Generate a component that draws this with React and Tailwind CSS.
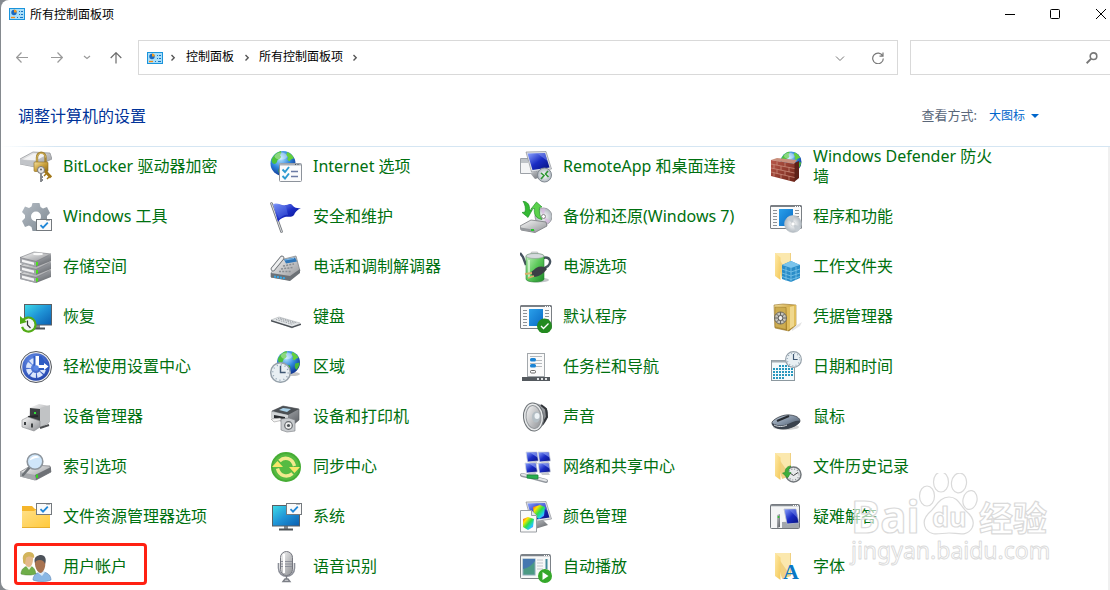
const stops = {
  silver: ['#fafafa', '#8d8f93'],
  steel: ['#c9ccd0', '#5a5d62'],
  navy: ['#8fa6ff', '#1a2cc4', '#05107c'],
  cyan: ['#3fdde8', '#1f93d6', '#0a5eb0'],
  blue: ['#2aa0ea', '#0a6ac4'],
  gold: ['#f7e3a0', '#c9a03c', '#8f6a18'],
  folder: ['#ffe9a6', '#f3c95a'],
  folderFlat: ['#ffe08a', '#ffc93a'],
  battery: ['#c8f2c4', '#5cc95a', '#1d8a28'],
  brick: ['#b8584a', '#702418'],
  rainbow: ['#ff2a2a', '#ffe600', '#2ae04a', '#20c8ff', '#d020ff'],
  gear: ['#b4bcc4', '#7d8790'],
  mouse: ['#c3ced9', '#7e8da0', '#39414d'],
}

function Gradients() {
  return (
    <svg className="absolute size-0" aria-hidden="true">
      <defs>
        {Object.entries(stops).map(([id, colors]) => (
          <linearGradient key={id} id={id} x1="0" y1="0" x2="1" y2="1">
            {colors.map((color, i) => (
              <stop key={color} offset={i / (colors.length - 1)} stopColor={color} />
            ))}
          </linearGradient>
        ))}
        <radialGradient id="globe" cx="0.4" cy="0.3" r="0.75">
          <stop offset="0" stopColor="#b8e6ff" />
          <stop offset="0.5" stopColor="#2f86dc" />
          <stop offset="1" stopColor="#0b2c8c" />
        </radialGradient>
        <radialGradient id="disc" cx="0.5" cy="0.5" r="0.55">
          <stop offset="0" stopColor="#ffffff" />
          <stop offset="1" stopColor="#a9b2ba" />
        </radialGradient>
        <radialGradient id="access" cx="0.4" cy="0.3" r="0.8">
          <stop offset="0" stopColor="#6a92ea" />
          <stop offset="1" stopColor="#1c3ea8" />
        </radialGradient>
      </defs>
    </svg>
  )
}

/* shared pieces */

function Globe({ cx, cy, r }) {
  return (
    <g transform={`translate(${cx} ${cy}) scale(${r / 12})`}>
      <circle r="12" fill="url(#globe)" />
      <path d="M-11-4c2-4 5-7 9-8 1 2 0 3-1 4 2 1 1 3-1 4-2 0-1 3-3 4-2 1-4 0-4-4z" fill="#4cc23a" />
      <path d="M4-11c3 1 5 3 6.500 6l-2.500 1-2 2-2-2 1-2-2-2z" fill="#63cf3e" />
      <path d="M-3 3c3-1 5 0 5 2 0 3-3 3-4 6-3-2-3-5-1-8z" fill="#3aa832" />
      <path d="M7 1l4.500-1c0 3-1 5-3 7.500-2-1-2.500-4-1.500-6.500z" fill="#48b838" />
      <ellipse cx="-2" cy="-7" rx="6" ry="3.500" fill="#fff" opacity=".35" />
    </g>
  )
}

function CheckWindow({ x, y }) {
  return (
    <g transform={`translate(${x} ${y})`}>
      <rect x=".5" y=".5" width="15" height="11" fill="#fafafa" stroke="#74797e" />
      <path d="M10.500 1.500h1M12.500 1.500h1" stroke="#74797e" />
      <path d="M4.500 6.200l2.500 2.500 4.800-5" fill="none" stroke="#1f87d8" strokeWidth="1.800" />
    </g>
  )
}

function Clock({ cx, cy, r }) {
  return (
    <g transform={`translate(${cx} ${cy}) scale(${r / 10})`}>
      <circle r="9.500" fill="#e8eff3" stroke="#96a1aa" strokeWidth="1.400" />
      <circle r="7.500" fill="none" stroke="#8fa3b3" strokeDasharray="1 2.930" strokeWidth="1.400" />
      <path d="M0-6.500V0h5" fill="none" stroke="#3f5873" strokeWidth="1.400" />
    </g>
  )
}

function TallFolder() {
  return (
    <>
      <path d="M5 2h16v23l-9 3z" fill="#f0d182" />
      <path d="M5 2h15v22l-9-13z" fill="#fbe8ae" />
      <path d="M5 2l5.500 4.500v22.500L5 25z" fill="url(#folder)" />
    </>
  )
}

function ListWindow() {
  return (
    <>
      <rect x=".5" y="4.500" width="31" height="23" rx=".5" fill="#fafafa" stroke="#7a7f84" />
      <path d="M1 5.500h30" stroke="#7a7f84" />
      <path d="M25 5.500h1M27 5.500h1M29 5.500h1" stroke="#fff" />
      <path d="M3 9.500h4M3 12.500h4M3 15.500h4M3 18.500h4M3 21.500h4M3 24.500h4M25 9.500h4M25 12.500h4M25 15.500h4M25 18.500h4" stroke="#8d9297" />
      <rect x="9" y="8" width="14" height="17" fill="url(#blue)" />
    </>
  )
}

function FlatMonitor({ x, y }) {
  return (
    <g transform={`translate(${x} ${y})`}>
      <path d="M12 20h4v4h-4z" fill="#84898e" />
      <path d="M7 23.500h14v2H7z" fill="#4d5257" />
      <rect x=".5" y=".5" width="27" height="20.500" fill="url(#cyan)" stroke="#5a5f64" />
    </g>
  )
}

function TiltMonitor() {
  return (
    <>
      <path d="M10 22l13-3 5 5-13 4z" fill="url(#steel)" />
      <path d="M6 1l20-.5 5.500 17.500-20 3z" fill="#dfe2e6" stroke="#7d8288" strokeWidth=".6" />
      <path d="M7.500 2.500l17.500-.5 4.500 14.500-17 2.500z" fill="url(#navy)" />
      <path d="M17 2.200l8-.2 2.500 8z" fill="#8da0f2" opacity=".45" />
    </>
  )
}

/* one drawing per item, on a 32 x 32 grid */

const icons = {
  bitlocker: (
    <>
      <path d="M0 8l13-7 17 1 2 6-17 8-15-3z" fill="url(#silver)" stroke="#8c8f93" strokeWidth=".7" />
      <path d="M0 8l15 3v5L0 13z" fill="#c1c4c8" />
      <path d="M3 8.500l11-6 13 1-11 6z" fill="#f3f3f4" />
      <path d="M17 12V6.500c0-6.500 8.500-6.500 8.500 0V12" fill="none" stroke="#a58536" strokeWidth="2.400" />
      <path d="M17 12V6.500c0-5.500 8.500-5.500 8.500 0" fill="none" stroke="#e0c46c" strokeWidth=".8" />
      <rect x="14" y="11" width="14" height="9.500" rx="1" fill="url(#gold)" stroke="#8b6a1f" strokeWidth=".6" />
      <path d="M23 18l8 8.500" stroke="#a27718" strokeWidth="3" />
      <path d="M26 23l-2 2M29 26l-2 2" stroke="#a27718" strokeWidth="1.500" />
      <circle cx="21" cy="19" r="3.500" fill="#e6e6e6" stroke="#777" />
      <circle cx="21" cy="18.500" r="1" fill="#666" />
      <path d="M21 22v9M21 26h2M21 29h2" stroke="#85888c" strokeWidth="1.900" />
    </>
  ),
  internet: (
    <>
      <Globe cx={13} cy={12.5} r={12.5} />
      <rect x="9.500" y="12.500" width="22" height="18" rx="1" fill="#fbfbfc" stroke="#8d939b" />
      <path d="M10 13.500h21" stroke="#aab0b8" strokeWidth="2" />
      <path d="M25 13.500h1M27.500 13.500h1" stroke="#4d545c" />
      <path d="M12.500 18.500l2.500 2.500 4-5M12.500 25l2.500 2.500 4-5" fill="none" stroke="#2c9ad0" strokeWidth="1.900" />
      <path d="M21 20.500h7M21 25.500h7" stroke="#6b7aa4" strokeWidth="1.400" />
    </>
  ),
  remote: (
    <>
      <path d="M.5 7.500h16v15H.5z" fill="#f4f5f6" stroke="#9ca1a7" />
      <path d="M1 9h9M1 11h7" stroke="#8a9299" />
      <TiltMonitor />
      <circle cx="24.500" cy="24" r="7" fill="url(#disc)" stroke="#808890" />
      <path d="M21 22l3 2.500-3 3.500M28 20l-2.500 3 3 3" fill="none" stroke="#2f9632" strokeWidth="1.600" />
    </>
  ),
  firewall: (
    <>
      <Globe cx={21} cy={11} r={10.5} />
      <path d="M24 12l5-2v17l-5 4z" fill="#5e2118" />
      <path d="M1 9l6-2 20 2-3 4z" fill="#c98f7c" />
      <path d="M1 9l23.500 4v18L1 25z" fill="url(#brick)" />
      <path d="M1 13l23.500 4.500M1 17l23.500 5M1 21l23.500 5.500M7 10v4M15 11.500v4M4 13.500v4M11 15v4M19 16.500v4.500M7 18.500v4M15 20.200v4M4 21.500v4M11 23.300v4M19 25v4.500" stroke="#cf9584" strokeWidth=".7" />
    </>
  ),
  tools: (
    <>
      <path
        d="M12.500 2h7l1 4 2.500 1.500 4-1.500 3 6-3 3v3l3 3-3 6-4-1.500-2.500 1.500-1 3h-7l-1-4L9 24.500l-4 1.500-3-6 3-3v-3l-3-3 3-5.500L9 7l2.500-1.500z"
        fill="url(#gear)"
      />
      <circle cx="16" cy="15.500" r="5" fill="#fff" />
      <CheckWindow x={16} y={18} />
    </>
  ),
  flag: (
    <>
      <path d="M1.500 2.500l10 28" stroke="#75797e" strokeWidth="2.600" strokeLinecap="round" />
      <path d="M1.500 2.500l10 28" stroke="#dadcdf" strokeWidth="1" strokeLinecap="round" />
      <path d="M3 3c5-2 8 2 13 1 4-1 5-2 7 1 2 2 5 2.500 8 2-4 2-6 4-7 7-3 3-6 1-9 2-4 1.500-5 2-7 5z" fill="url(#navy)" />
      <path d="M4 4c5-1 8 2 12 1l2 9c-4-1-6 2-9 4z" fill="#5c78ea" opacity=".45" />
    </>
  ),
  backup: (
    <>
      <circle cx="23.500" cy="15.500" r="8.500" fill="url(#disc)" stroke="#9a9da1" />
      <path d="M23.500 15.500l-3-8 5-.3zM23.500 15.500l7 4.500-4 3.500z" fill="#d9b8e0" opacity=".7" />
      <circle cx="23.500" cy="15.500" r="2" fill="#fff" stroke="#888" />
      <path d="M0 25l11-6 15 2 1 4-12 6.500L1 29z" fill="url(#silver)" stroke="#777a7e" strokeWidth=".8" />
      <path d="M1 26.500l14 2.500v2L1 29z" fill="#96999d" />
      <path d="M11 29h3" stroke="#25c62a" strokeWidth="2" />
      <path d="M3 0c5 1 7 4 6.500 9l3-.5-4.500 8L2 11.500l3-.5C6 7 5 4 3 0z" fill="#34b933" stroke="#138a1b" strokeWidth=".6" />
      <path d="M16.500 1l5.500 5-2.500.5c-.5 5 0 8 2.500 12-6-1-8.500-5-7.500-11L11 8z" fill="#5bd14c" stroke="#138a1b" strokeWidth=".6" />
    </>
  ),
  programs: (
    <>
      <ListWindow />
      <circle cx="23" cy="23" r="8.500" fill="url(#disc)" stroke="#b9bfc5" strokeWidth=".6" />
      <path d="M23 23l-6-6c2-2 5-2.500 7-2zM23 23l8 3c-1 3-3 4.500-5 5z" fill="#c5ccd2" />
      <circle cx="23" cy="23" r="2" fill="#fff" stroke="#c0c4c8" strokeWidth=".6" />
    </>
  ),
  storage: (
    <>
      {[20, 12, 4].map((y) => (
        <g key={y} transform={`translate(0 ${y})`}>
          <path d="M0 2v6l16 4 15-6V0z" fill="url(#steel)" />
          <path d="M0 2.500l16 4V12L0 8z" fill="#a2a4a9" />
          <path d="M2 4.500l12 3v2.500L2 7z" fill="#f3f3f4" />
          <path d="M0 2.500L14-3l17 2-15 7.500z" fill="url(#silver)" stroke="#77797d" strokeWidth=".6" />
          <rect x="16" y="7" width="2" height="3.500" fill="#4ce01c" />
        </g>
      ))}
      <ellipse cx="18" cy="3" rx="5" ry="1.200" fill="#fafafa" />
    </>
  ),
  phone: (
    <>
      <path d="M1 22l9-13 16-4 4 15-10 9L1 26z" fill="url(#silver)" stroke="#777c81" strokeWidth=".7" />
      <path d="M1 22l19 3 10-7v4L20 30 1 26.500z" fill="#6c7176" />
      <path d="M4 25.500l12 2" stroke="#33a7e8" strokeWidth="2" strokeDasharray="2 1" />
      <path d="M14 8.500l11-2 2 4-11 2z" fill="#2f76b8" />
      <path d="M15 9l9-1.500" stroke="#7bb9ea" />
      <path d="M13 15l11-2M11 18l12-1.500M9 20.500l12 0" stroke="#888d92" strokeWidth="1.500" strokeDasharray="2 1.200" />
      <path d="M3 18L12 7" fill="none" stroke="#676c71" strokeWidth="4.600" strokeLinecap="round" />
      <path d="M3 18L12 7" fill="none" stroke="#eff0f1" strokeWidth="3" strokeLinecap="round" />
    </>
  ),
  power: (
    <>
      <ellipse cx="18" cy="29" rx="11" ry="2.500" fill="#c3c6c9" />
      <path d="M0 2l3 4 3 8M23 7c7-2 9 4 5 8l-7 4" fill="none" stroke="#45525e" strokeWidth="2.400" />
      <rect x="11" y="1" width="7" height="3" rx="1" fill="#dcdfe1" stroke="#999" strokeWidth=".5" />
      <path d="M6 5c0-3 18-3 18 0v23c0 4-18 4-18 0z" fill="url(#battery)" stroke="#2a8132" strokeWidth=".6" />
      <ellipse cx="15" cy="5" rx="9" ry="2.500" fill="#d5dadd" stroke="#8f9a96" strokeWidth=".6" />
      <path d="M9 9v18" stroke="#e5fbe1" strokeWidth="2" opacity=".7" />
      <path d="M10 22l6-5c4-2 8-2 11 1-3 4-8 8-13 8z" fill="#3b3f45" />
      <path d="M5 23l7-1M8 27l6-2" stroke="#d8b06a" strokeWidth="1.800" />
    </>
  ),
  workFolder: (
    <>
      <TallFolder />
      <path d="M12 14l9-4 9 4v13l-9 4-9-3z" fill="#2a8dc8" />
      <path d="M12 14l9-4 9 4-9 3z" fill="#7bc4ec" />
      <path d="M12 18l9 3 9-3M12 22l9 3 9-3M12 25.500l9 3 9-3M21 17v14M16 16v14M26 16v13" fill="none" stroke="#7cc4ea" strokeWidth=".8" />
    </>
  ),
  recovery: (
    <>
      <FlatMonitor x={4} y={3} />
      <circle cx="8" cy="24" r="7" fill="#f4f5f5" />
      <path d="M2.500 20a7 7 0 1 1-.5 6" fill="none" stroke="#52ab15" strokeWidth="2.200" />
      <path d="M0 15v8l7-2z" fill="#52ab15" />
      <path d="M7.500 19.500V24l3 3" fill="none" stroke="#333" strokeWidth="1.200" />
    </>
  ),
  keyboard: (
    <>
      <path d="M1 19l8-3 21 6-8 5z" fill="#e3e6e8" stroke="#9ba0a5" strokeWidth=".5" />
      <path d="M1 19l21 6.500 9-3v1.500l-9 3-21-6.500z" fill="#4b5056" />
      <path d="M6 18.500l17 5M8 17.500l17 5M10 17l17 5" stroke="#a0a5aa" strokeDasharray="1.500 1" />
    </>
  ),
  defaults: (
    <>
      <ListWindow />
      <circle cx="24.500" cy="25" r="7.500" fill="#238a1f" />
      <path d="M21 25l2.500 2.500 5-5" fill="none" stroke="#fff" strokeWidth="1.300" />
    </>
  ),
  safe: (
    <>
      <path d="M22 27l10-6-2 4-8 5z" fill="#e4e4e4" />
      <path d="M4 4l9-1 13 1v20l-7 6L5 27z" fill="url(#gold)" stroke="#94722a" strokeWidth=".6" />
      <path d="M17 6l9-2v20l-9 6z" fill="#e0bd5c" />
      <path d="M20 6l4-1v20l-4 2.500z" fill="#f0d88e" />
      <path d="M5 6l11 .5v22L5 26z" fill="#cdac50" stroke="#9a7a2c" strokeWidth=".5" />
      <circle cx="10.500" cy="17" r="6" fill="#c5c4bd" stroke="#6f6b60" />
      <circle cx="10.500" cy="17" r="2.500" fill="#f0f0ef" stroke="#4b4b4b" />
      <path d="M10.500 11v3M10.500 20v3M4.500 17h3M13.500 17h3M6.500 13l2 2M12.500 19l2 2M14.500 13l-2 2M8.500 19l-2 2" stroke="#66655d" />
    </>
  ),
  ease: (
    <>
      <circle cx="16" cy="16" r="15.500" fill="#ececee" stroke="#55595f" />
      <circle cx="16" cy="16" r="13.700" fill="url(#access)" />
      <circle cx="16" cy="17" r="7.500" fill="none" stroke="#dbe6fb" strokeWidth="5" strokeDasharray="4.700 1.190" />
      <path d="M13.500 17V5h8l3 5 5 5-4 4h-9z" fill="#2e5cc4" />
      <path d="M15.500 5h3.500v9h5v-2l4.500 3.500-4.500 3.500v-2h-6l-2.500-2z" fill="#fff" />
      <circle cx="16" cy="17" r="2.800" fill="#5b86e4" />
    </>
  ),
  region: (
    <>
      <ellipse cx="22" cy="23" rx="8" ry="2" fill="#c5c5c5" />
      <Globe cx={18.5} cy={11.5} r={11.5} />
      <Clock cx={10.5} cy={21.5} r={10.3} />
    </>
  ),
  taskbar: (
    <>
      <rect x="7.500" y="2.500" width="17" height="23" fill="#fafafa" stroke="#a3a8ac" />
      <path d="M10 5.500h12M16 9.500h6M16 15.500h6M10 12.500h12" stroke="#b6babe" />
      <rect x="10" y="7" width="6" height="3.500" rx="1.500" fill="#1c84d4" />
      <rect x="10" y="13" width="6" height="3.500" rx="1.500" fill="#1c84d4" />
      <rect x="10.500" y="19.500" width="5" height="2.500" rx="1" fill="#fff" stroke="#444" strokeWidth=".8" />
      <path d="M2 26h28v4H2z" fill="#54595e" />
      <path d="M17 28h2M21 28h2M25 28h2" stroke="#dfe1e3" strokeWidth="2" />
    </>
  ),
  date: (
    <>
      <rect x="1.500" y="9.500" width="23" height="20" fill="#f4fafc" stroke="#8c989f" />
      <path d="M2 10.500h22" stroke="#a4afb5" strokeWidth="2" />
      <path d="M9 15h14M3 18h20M3 21h20M3 24h20M3 27h12" stroke="#2797be" strokeWidth="2" strokeDasharray="2 1" />
      <Clock cx={23.5} cy={8.5} r={8.3} />
    </>
  ),
  devices: (
    <>
      <path d="M9 7l10-4 10 2v17l-8 4-12-6z" fill="url(#silver)" />
      <path d="M20 7l10-3v17l-10 5z" fill="#c1c3c5" />
      <path d="M10 7l10 1v13l-10-2z" fill="#3c3f41" />
      <rect x="14" y="11" width="2" height="2" fill="#31e33b" />
      <path d="M8 16l10-1" stroke="#282a2d" strokeWidth="2" />
      <path d="M2 19l6-3 12 4v6l-6 4-12-4z" fill="url(#silver)" stroke="#8a8c8f" strokeWidth=".6" />
      <path d="M5 21v3M12 22.500v4" stroke="#3d4042" strokeWidth="2" />
      <path d="M20 27l9-3" stroke="#4d4f51" strokeWidth="2" />
    </>
  ),
  printers: (
    <>
      <path d="M2 10l11-5 16 3v11l-6 5L2 17z" fill="url(#steel)" stroke="#55585c" strokeWidth=".6" />
      <path d="M2 10l11-5 16 3-11 6z" fill="#4c5054" />
      <path d="M9 9l4-2 8 1-4 3z" fill="#a8d0e8" />
      <path d="M2 11l16 3v8L2 18z" fill="#d2d5d7" />
      <path d="M4 14l11 2v3L4 17z" fill="#26292c" />
      <path d="M1 18l9-1 3 2-9 2z" fill="#f5f5f5" stroke="#888" strokeWidth=".5" />
      <path d="M11 18l8-1 6 2v11l-8 1-6-2z" fill="#c9cccf" stroke="#777b7f" strokeWidth=".6" />
      <circle cx="18.500" cy="24.500" r="3.800" fill="#eee" stroke="#65696d" strokeWidth="1.200" />
      <circle cx="18.500" cy="24.500" r="1.600" fill="#4d5256" />
    </>
  ),
  sound: (
    <>
      <path d="M14 2c9 1 15 5 14 12s-5 11-12 15z" fill="url(#steel)" />
      <path d="M21 4l5 4 1 8-5 8" fill="none" stroke="#33363a" strokeWidth="2" />
      <ellipse cx="13.500" cy="16" rx="10" ry="14" fill="#e8eaeb" stroke="#6d7276" transform="rotate(-6 13.500 16)" />
      <ellipse cx="13.500" cy="16" rx="7.500" ry="11.500" fill="url(#silver)" stroke="#95999d" transform="rotate(-6 13.500 16)" />
      <ellipse cx="16" cy="16" rx="4" ry="5.500" fill="#b4bec4" />
      <ellipse cx="17" cy="15" rx="2.500" ry="3" fill="#eef3f6" />
    </>
  ),
  mouse: (
    <>
      <ellipse cx="16" cy="26" rx="13" ry="3" fill="#d0d0d0" />
      <path d="M2 21c3-4 12-8 18-7 6 .5 10 3 10 6s-9 8-17 8C7 28 1 25 2 21z" fill="url(#mouse)" stroke="#2b3038" strokeWidth=".7" />
      <path d="M2 22c5 3 11 3 16 1s8-4 12-3c0 3-9 8-17 8-6 0-11-2-11-6z" fill="#3a424d" />
      <path d="M4 24c4 2 9 2 13 0" fill="none" stroke="#d8dde1" />
      <path d="M7 20l12-5" stroke="#262b32" strokeWidth="2.200" />
    </>
  ),
  indexing: (
    <>
      <path d="M0 21l12-7 18 1 1 6-15 8-16-4z" fill="url(#silver)" stroke="#77797d" strokeWidth=".7" />
      <path d="M0 21l15 3v5.500L0 25.500z" fill="#a3a6aa" />
      <path d="M15 24l16-8V21l-15 8z" fill="#6e7176" />
      <rect x="16" y="23.500" width="2" height="3.500" fill="#35d322" />
      <path d="M10 16L3 24" stroke="#6d7277" strokeWidth="2.600" strokeLinecap="round" />
      <circle cx="15" cy="10.500" r="7.800" fill="#cfe6fa" stroke="#8d959d" strokeWidth="1.600" />
      <path d="M9.500 9.500c1-4 7-6 10-3-3 0-6 1-10 3z" fill="#fff" />
    </>
  ),
  sync: (
    <>
      <circle cx="16" cy="16" r="15" fill="#46ad34" />
      <circle cx="16" cy="16" r="13" fill="#56bb42" />
      <path d="M9.500 10c5-5 13-3 15 5M22.500 22.500c-5 4.500-13 3-15-5" fill="none" stroke="#f2ea8e" strokeWidth="3.400" />
      <path d="M19 16h11l-5.500 6zM13 16H2l5.500-6z" fill="#f8e66a" />
    </>
  ),
  network: (
    <>
      {[[6, 1], [18, 1], [5, 12], [18, 12]].map(([x, y]) => (
        <g key={`${x}-${y}`} transform={`translate(${x} ${y})`}>
          <path d="M3 10l7-1 2 3H4z" fill="#c5c8cc" />
          <path d="M0 0h11l1.500 9-11 1z" fill="url(#navy)" stroke="#d5d9de" strokeWidth=".8" />
          <path d="M4 .5h6.500l1 5z" fill="#9fb2fa" opacity=".6" />
        </g>
      ))}
      <path d="M2 24l9 2 15 4" fill="none" stroke="#94999f" strokeWidth="4" strokeLinecap="round" />
      <path d="M2 23.500l24 6" stroke="#e4e6e8" strokeWidth="2" strokeLinecap="round" />
      <path d="M7 24h11v4l-11-1z" fill="#27ae4d" stroke="#17843a" strokeWidth=".8" />
    </>
  ),
  history: (
    <>
      <TallFolder />
      <circle cx="23.500" cy="23.500" r="7.500" fill="#e7e9ea" stroke="#72777b" strokeWidth="1.500" />
      <circle cx="23.500" cy="23.500" r="5.500" fill="none" stroke="#8b8f94" strokeWidth="1.200" strokeDasharray="1 1.880" />
      <path d="M20 22l3.500 2.500 4.500-3" fill="none" stroke="#444" />
      <path d="M21 15c-4 0-6 3-6 6.500l-2.500.5 5 5 3.500-5.500h-2.500c0-3 .5-4 2.500-6.500z" fill="#3fae3c" stroke="#1f8424" strokeWidth=".5" />
    </>
  ),
  explorer: (
    <>
      <path d="M2 5h10l3 3h14v8H2z" fill="#f5b52a" />
      <path d="M2 10h12l3-2h13v19H2z" fill="url(#folderFlat)" />
      <path d="M2 26.500h28" stroke="#e6ae2e" />
      <CheckWindow x={16} y={2} />
    </>
  ),
  system: (
    <>
      <FlatMonitor x={2} y={4} />
      <CheckWindow x={16} y={2} />
    </>
  ),
  color: (
    <>
      <TiltMonitor />
      <path d="M13 6l7-2 5 2-1 9-5 3-5-3z" fill="url(#rainbow)" />
      <path d="M.5 9.500h11l5 5v16.500H.5z" fill="#fafafa" stroke="#9a9ea3" />
      <path d="M11.500 9.500v5h5" fill="#e5e7e9" stroke="#9a9ea3" />
      <path d="M3 18l5-2 6 2-1 8-5 3-5-3z" fill="url(#rainbow)" />
    </>
  ),
  troubleshoot: (
    <>
      <rect x=".5" y="3.500" width="29" height="24" rx="1" fill="#f4f5f6" stroke="#71767c" />
      <path d="M1 4.500h28" stroke="#868c92" strokeWidth="1.500" />
      <path d="M23 4.500h1M25 4.500h1M27 4.500h1" stroke="#fff" />
      <path d="M12 21l17-1v7H12z" fill="#a2a7ad" />
      <path d="M7 14l3-1v13l-3 1z" fill="url(#steel)" />
      <path d="M14 8h12l3 14-12 1z" fill="url(#navy)" stroke="#bcc3ce" strokeWidth=".8" />
      <path d="M19 8.500h7l2 9z" fill="#7d92ec" opacity=".5" />
      <circle cx="8.500" cy="16" r="1" fill="#29c52a" />
    </>
  ),
  users: (
    <>
      <path d="M1 23c0-5 4-8 8-8s6 3 7 8l-5 1c-4 0-7 0-10-1z" fill="#6fae49" stroke="#4f8434" strokeWidth=".5" />
      <path d="M6 15l3 4 3-4z" fill="#e9f1df" />
      <path d="M5 3c5-4 9 0 8 5 0 5-2 8-4 8-4 0-7-8-4-13z" fill="#e4b98c" />
      <path d="M3 9c-1-5 2-8 6-8 4 0 6 3 5 6-4-2-6-2-8 0l-1 6c-2 0-2-2-2-4z" fill="#d2b45c" />
      <path d="M13 29c0-5 4-8 9-8 5 0 9 3 9 8-5 2-13 2-18 0z" fill="#8ab7e4" stroke="#5e87b5" strokeWidth=".6" />
      <path d="M17 21l5 4 3-4z" fill="#d9e9f7" />
      <path d="M15 9c2-4 9-5 10 1 1 6-1 10-4 12-4 0-7-7-6-13z" fill="#a87351" />
      <path d="M15 12c-2-6 3-8 6-8 4 0 6 4 4 9-1-4-5-5-9-3z" fill="#4d525a" />
    </>
  ),
  speech: (
    <>
      <path d="M8.500 12v5c0 11 16 11 16 0v-5" fill="none" stroke="#8c8f98" strokeWidth="1.600" />
      <path d="M16.500 25v3M13 30.500l2-2.500h3l2 2.500z" fill="#d8d8dc" stroke="#7c7f86" strokeWidth="1.300" />
      <rect x="10.500" y=".5" width="12" height="24" rx="6" fill="url(#silver)" stroke="#74767e" />
      <path d="M11 10.500h11M11 13h11M11 15.500h11" stroke="#8c8f99" />
      <path d="M14 3v19" stroke="#fff" strokeWidth="2" />
    </>
  ),
  autoplay: (
    <>
      <rect x=".5" y="3.500" width="30" height="24" rx="1" fill="#f7f8f8" stroke="#7c8288" />
      <path d="M1 4.500h29" stroke="#7c8288" strokeWidth="1.500" />
      <path d="M24 4.500h1M26 4.500h1M28 4.500h1" stroke="#fff" />
      <rect x="3" y="8" width="12" height="16" fill="#4b9a84" stroke="#8aa8b8" />
      <path d="M3 18c5-1 9-4 12-8V8H3z" fill="#4577b0" />
      <path d="M17 9h6M17 12h6M17 15h6M17 18h6" stroke="#c1c6ca" />
      <path d="M26.500 8v10" stroke="#438b9c" strokeWidth="2" />
      <circle cx="25" cy="25" r="7" fill="#35a82a" />
      <path d="M22.500 21l6 4-6 4z" fill="#fff" />
    </>
  ),
  fonts: (
    <>
      <TallFolder />
      <text x="13" y="28" fontSize="22" fontWeight="700" fill="#0a78c4" className="font-['Liberation_Serif',serif]">A</text>
    </>
  ),
}

const items = [
  ['bitlocker', 'BitLocker 驱动器加密'],
  ['internet', 'Internet 选项'],
  ['remote', 'RemoteApp 和桌面连接'],
  ['firewall', 'Windows Defender 防火墙'],
  ['tools', 'Windows 工具'],
  ['flag', '安全和维护'],
  ['backup', '备份和还原(Windows 7)'],
  ['programs', '程序和功能'],
  ['storage', '存储空间'],
  ['phone', '电话和调制解调器'],
  ['power', '电源选项'],
  ['workFolder', '工作文件夹'],
  ['recovery', '恢复'],
  ['keyboard', '键盘'],
  ['defaults', '默认程序'],
  ['safe', '凭据管理器'],
  ['ease', '轻松使用设置中心'],
  ['region', '区域'],
  ['taskbar', '任务栏和导航'],
  ['date', '日期和时间'],
  ['devices', '设备管理器'],
  ['printers', '设备和打印机'],
  ['sound', '声音'],
  ['mouse', '鼠标'],
  ['indexing', '索引选项'],
  ['sync', '同步中心'],
  ['network', '网络和共享中心'],
  ['history', '文件历史记录'],
  ['explorer', '文件资源管理器选项'],
  ['system', '系统'],
  ['color', '颜色管理'],
  ['troubleshoot', '疑难解答'],
  ['users', '用户帐户'],
  ['speech', '语音识别'],
  ['autoplay', '自动播放'],
  ['fonts', '字体'],
]

function PanelIcon() {
  return (
    <svg viewBox="0 0 16 12" className="h-3 w-4 shrink-0" aria-hidden="true">
      <rect x=".5" y=".5" width="15" height="11" fill="#a9def8" stroke="#1a94dc" />
      <circle cx="5" cy="4.500" r="2.700" fill="#1768c0" />
      <path d="M5 4.500V1.500a3 3 0 0 1 2.800 3z" fill="#f29a1f" />
      <path d="M2 9.500h4" stroke="#f08a1a" strokeWidth="1.300" />
      <path d="M8 9.500h1M10 3.500h1M10 6.500h1M12 3.500h2M12 6.500h2M11 9.500h3" stroke="#1674c4" />
    </svg>
  )
}

function Stroke({ d, className }) {
  return (
    <svg viewBox="0 0 12 12" fill="none" stroke="currentColor" className={`size-3 shrink-0 ${className ?? ''}`} aria-hidden="true">
      <path d={d} />
    </svg>
  )
}

function CrumbArrow() {
  return <Stroke d="M4.500 3L7.200 5.700 4.500 8.400" className="text-[#555] [stroke-width:1.4]" />
}

function TitleBar() {
  return (
    <header className="flex h-7 items-center pl-2">
      <PanelIcon />
      <h1 className="ml-[5px] flex-1 pt-0.5 text-xs text-black">所有控制面板项</h1>
      <button type="button" aria-label="最小化" className="flex h-7 w-[45px] items-center justify-center">
        <Stroke d="M1 6.500h10" />
      </button>
      <button type="button" aria-label="最大化" className="flex h-7 w-[45px] items-center justify-center">
        <svg viewBox="0 0 12 12" className="size-3" fill="none" stroke="currentColor" aria-hidden="true">
          <rect x="1.500" y="1.500" width="9" height="9" rx="1" />
        </svg>
      </button>
      <button type="button" aria-label="关闭" className="flex h-7 w-[33px] items-center justify-end pr-[3px]">
        <Stroke d="M1 1l10 10M11 1L1 11" />
      </button>
    </header>
  )
}

function NavBar() {
  return (
    <nav className="flex h-[35px] items-stretch pl-[3px]">
      <button type="button" aria-label="后退" className="flex w-[35px] items-center justify-center text-[#9a9a9a]">
        <Stroke d="M12 5.500H.7M5.500.5L.7 5.500l4.800 5" className="[stroke-width:1.2]" />
      </button>
      <button type="button" aria-label="前进" className="flex w-[35px] items-center justify-center text-[#9a9a9a]">
        <Stroke d="M0 5.500h11.300M6.500.5l4.800 5-4.800 5" className="[stroke-width:1.2]" />
      </button>
      <button type="button" aria-label="最近浏览的位置" className="flex w-[26px] items-center justify-center text-[#9a9a9a]">
        <Stroke d="M3 4L6 6.500 9 4" className="[stroke-width:1.2]" />
      </button>
      <button type="button" aria-label="向上" className="flex w-8 items-center justify-center text-[#6a6a6a]">
        <Stroke d="M6 11.500V.7M.7 6L6 .7 11.300 6" className="[stroke-width:1.2]" />
      </button>

      <div className="ml-1.5 flex flex-1 items-center border border-[#d9d9d9] pl-2 text-xs text-black">
        <PanelIcon />
        <span className="flex w-[23px] pl-1"><CrumbArrow /></span>
        <a href="#panel" className="-mt-0.5">控制面板</a>
        <span className="flex w-[25px] justify-center"><CrumbArrow /></span>
        <a href="#all" className="-mt-0.5">所有控制面板项</a>
        <span className="flex w-6 justify-center"><CrumbArrow /></span>
        <span className="flex-1" />
        <button type="button" aria-label="以前的位置" className="flex w-[38px] justify-center text-[#777]">
          <Stroke d="M2 4.500L6 8.500l4-4" />
        </button>
        <button type="button" aria-label="刷新" className="flex w-[38px] justify-center text-[#777]">
          <svg viewBox="0 0 12 12" className="size-3" fill="none" stroke="currentColor" strokeWidth="1.200" aria-hidden="true">
            <path d="M10.700 4A5.300 5.300 0 1 0 11.300 6.500M11 .5v3.700H7.500" />
          </svg>
        </button>
      </div>

      <div className="ml-3 flex w-[200px] items-center border border-r-0 border-[#d9d9d9] pr-3">
        <input type="search" aria-label="搜索控制面板" className="h-full min-w-0 flex-1 bg-transparent px-2 text-xs outline-none" />
        <svg viewBox="0 0 12 12" className="size-3" fill="none" stroke="#777" aria-hidden="true">
          <circle cx="7.500" cy="4.200" r="3.300" strokeWidth="1.600" />
          <path d="M5.200 6.600L.6 11.200" strokeWidth="2" />
        </svg>
      </div>
    </nav>
  )
}

function Item({ icon, label, marked }) {
  return (
    <li className="flex h-10 items-center pr-4">
      <a href={`#${icon}`} className="relative flex items-center gap-[11px] text-base leading-5 text-[#00700f]">
        <svg viewBox="0 0 32 32" className="size-8 shrink-0" aria-hidden="true">{icons[icon]}</svg>
        <span className="pb-0.5">{label}</span>
        {marked && <span className="absolute -top-2 -right-5 -bottom-0.5 -left-1.5 rounded-sm border-3 border-[#ff2012]" />}
      </a>
    </li>
  )
}

function Watermark() {
  return (
    <svg
      viewBox="0 0 210 100"
      className="pointer-events-none absolute right-[53px] bottom-[17px] h-[100px] w-[210px] font-['Noto_Sans','Noto_Sans_CJK_SC',sans-serif]"
      fill="#fff"
      fillOpacity=".65"
      stroke="#dadada"
      strokeWidth="1.200"
      strokeLinejoin="round"
      aria-hidden="true"
    >
      <text x="4" y="60" fontSize="44" fontWeight="700">Bai</text>
      <ellipse cx="80" cy="23" rx="7.500" ry="10" />
      <ellipse cx="94" cy="9" rx="7.500" ry="10" />
      <ellipse cx="112" cy="10" rx="7.500" ry="10" transform="rotate(8 112 10)" />
      <ellipse cx="123" cy="27" rx="7" ry="9.500" transform="rotate(12 123 27)" />
      <path d="M102 24c9 0 11 8 17 14 6 5 9 11 6 17-5 9-14 5-23 5s-17 4-23-4c-4-7-1-13 5-18 6-6 9-14 18-14z" />
      <text x="85" y="54" fontSize="27" fontWeight="700">du</text>
      <text x="132" y="58" fontSize="34" fontWeight="700">经验</text>
      <text x="4" y="86" fontSize="23" strokeWidth=".9">jingyan.baidu.com</text>
    </svg>
  )
}

function App() {
  return (
    <div className="flex min-h-screen bg-[#858a8f] pl-px font-['Noto_Sans','Noto_Sans_CJK_SC',sans-serif]">
      <Gradients />
      <div className="relative flex min-w-0 flex-1 flex-col gap-3 rounded-l-lg bg-white">
        <TitleBar />
        <div>
          <NavBar />
          <div className="flex h-[71px] items-center pt-2.5 pl-[17px]">
            <h2 className="flex-1 text-base text-[#003399]">调整计算机的设置</h2>
            <div className="mr-[69px] flex items-center">
              <label htmlFor="view" className="text-[13px] text-[#5a6779]">查看方式:</label>
              <span className="relative ml-3 flex items-center">
                <select id="view" defaultValue="large" className="w-[52px] appearance-none bg-transparent text-xs text-[#0066cc]">
                  <option value="category">类别</option>
                  <option value="large">大图标</option>
                  <option value="small">小图标</option>
                </select>
                <svg viewBox="0 0 8 4" className="pointer-events-none absolute right-0.5 h-1 w-2" aria-hidden="true">
                  <path d="M0 0h8L4 4z" fill="#0066cc" />
                </svg>
              </span>
            </div>
          </div>
          <div className="h-px bg-linear-to-r from-white via-[#d5e6f3] via-5% to-[#d5e6f3]" />
          <main className="border-r-2 border-[#f0f0f0] pb-[3px] pl-[19px]">
            <ul className="grid grid-cols-[repeat(auto-fill,250px)] gap-y-2.5">
              {items.map(([icon, label]) => (
                <Item key={icon} icon={icon} label={label} marked={icon === 'users'} />
              ))}
            </ul>
          </main>
        </div>
        <Watermark />
      </div>
    </div>
  )
}

export default App
